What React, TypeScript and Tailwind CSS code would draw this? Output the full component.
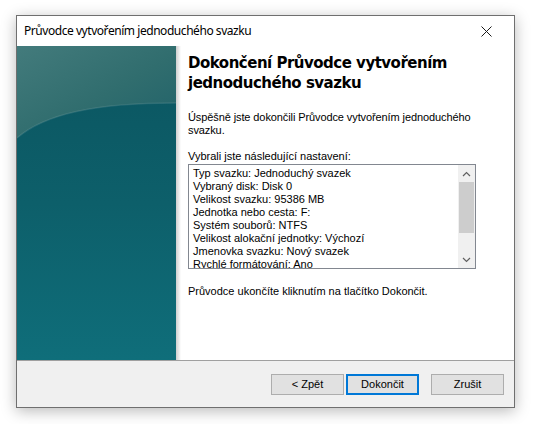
import React from 'react';

const settings = [
  'Typ svazku: Jednoduchý svazek',
  'Vybraný disk: Disk 0',
  'Velikost svazku: 95386 MB',
  'Jednotka nebo cesta: F:',
  'Systém souborů: NTFS',
  'Velikost alokační jednotky: Výchozí',
  'Jmenovka svazku: Nový svazek',
  'Rychlé formátování: Ano',
];

const SidePanel: React.FC = () => (
  <svg width="159" height="314" viewBox="0 0 159 314" preserveAspectRatio="none" className="block shrink-0">
    <defs>
      <linearGradient id="lower" x1="0" y1="0" x2="0" y2="1">
        <stop offset="0" stopColor="#0b5560" />
        <stop offset="0.5" stopColor="#0d5f6a" />
        <stop offset="1" stopColor="#0f6e7a" />
      </linearGradient>
      <linearGradient id="upper" x1="0" y1="0" x2="1" y2="1">
        <stop offset="0" stopColor="#437b7c" />
        <stop offset="0.55" stopColor="#306d6e" />
        <stop offset="1" stopColor="#1f6169" />
      </linearGradient>
    </defs>
    <rect x="0" y="0" width="159" height="314" fill="url(#lower)" />
    <path d="M0,92 C28,68 78,57 159,57 L159,0 L0,0 Z" fill="url(#upper)" />
    <path d="M0,92 C28,68 78,57 159,57" fill="none" stroke="rgba(255,255,255,0.10)" strokeWidth="1.5" />
  </svg>
);

const Button: React.FC<{ label: string; primary?: boolean }> = ({ label, primary }) => (
  <div
    className={`w-[73px] h-[21px] flex items-center justify-center bg-[#e1e1e1] text-[11px] text-black ${
      primary ? 'border-2 border-[#0078d7]' : 'border border-[#adadad]'
    }`}
  >
    {label}
  </div>
);

const App: React.FC = () => {
  return (
    <div className="w-[537px] h-[424px] bg-white relative" style={{ fontFamily: '"Liberation Sans", Arial, sans-serif' }}>
      <div className="absolute left-[16px] top-[15px] w-[499px] h-[393px] border border-[#6f6f6f] bg-white flex flex-col shadow-[0_3px_14px_rgba(0,0,0,0.28)]">
        {/* title bar */}
        <div className="h-[30px] shrink-0 flex items-center justify-between pl-[7px] pr-[22px]">
          <span className="text-[12px] text-black tracking-[-0.45px]" style={{ fontFamily: '"Noto Sans", "Open Sans", sans-serif' }}>
            Průvodce vytvořením jednoduchého svazku
          </span>
          <svg width="11" height="11" viewBox="0 0 11 11">
            <path d="M0.5,0.5 L10.5,10.5 M10.5,0.5 L0.5,10.5" stroke="#1a1a1a" strokeWidth="1" />
          </svg>
        </div>

        {/* content */}
        <div className="h-[314px] shrink-0 flex">
          <SidePanel />
          <div className="w-[5px] shrink-0 bg-gradient-to-r from-[#cfcfcf] to-white" />
          <div className="flex-1 pl-[7px] pt-[7px] pr-[20px]">
            <h1
              className="text-[15px] leading-[20px] font-bold text-black tracking-[-0.5px]"
              style={{ fontFamily: '"DejaVu Sans", Verdana, sans-serif' }}
            >
              Dokončení Průvodce vytvořením
              <br />
              jednoduchého svazku
            </h1>
            <p className="mt-[18px] text-[11px] leading-[13px] text-black tracking-[-0.1px]">
              Úspěšně jste dokončili Průvodce vytvořením jednoduchého
              <br />
              svazku.
            </p>
            <p className="mt-[13px] text-[11px] leading-[13px] text-black">Vybrali jste následující nastavení:</p>
            <div className="mt-[1px] w-[288px] h-[105px] border border-[#828790] flex overflow-hidden">
              <div className="flex-1 pl-[4px] pt-[2px] overflow-hidden">
                {settings.map((s) => (
                  <div key={s} className="text-[11px] leading-[13px] text-black whitespace-nowrap">
                    {s}
                  </div>
                ))}
              </div>
              <div className="w-[17px] shrink-0 bg-[#f0f0f0] flex flex-col items-center">
                <div className="h-[17px] flex items-center justify-center">
                  <svg width="9" height="6" viewBox="0 0 9 6">
                    <path d="M1,5 L4.5,1.5 L8,5" fill="none" stroke="#606060" strokeWidth="1.2" />
                  </svg>
                </div>
                <div className="w-[15px] h-[51px] bg-[#cdcdcd]" />
                <div className="flex-1" />
                <div className="h-[17px] flex items-center justify-center">
                  <svg width="9" height="6" viewBox="0 0 9 6">
                    <path d="M1,1 L4.5,4.5 L8,1" fill="none" stroke="#606060" strokeWidth="1.2" />
                  </svg>
                </div>
              </div>
            </div>
            <p className="mt-[16px] text-[11px] leading-[13px] text-black">
              Průvodce ukončíte kliknutím na tlačítko Dokončit.
            </p>
          </div>
        </div>

        {/* footer */}
        <div className="flex-1 bg-[#f0f0f0] border-t border-[#a0a0a0] flex items-start justify-end pt-[13px] pr-[10px]">
          <Button label="< Zpět" />
          <div className="ml-[2px]">
            <Button label="Dokončit" primary />
          </div>
          <div className="ml-[12px]">
            <Button label="Zrušit" />
          </div>
        </div>
      </div>
    </div>
  );
};

export default App;
